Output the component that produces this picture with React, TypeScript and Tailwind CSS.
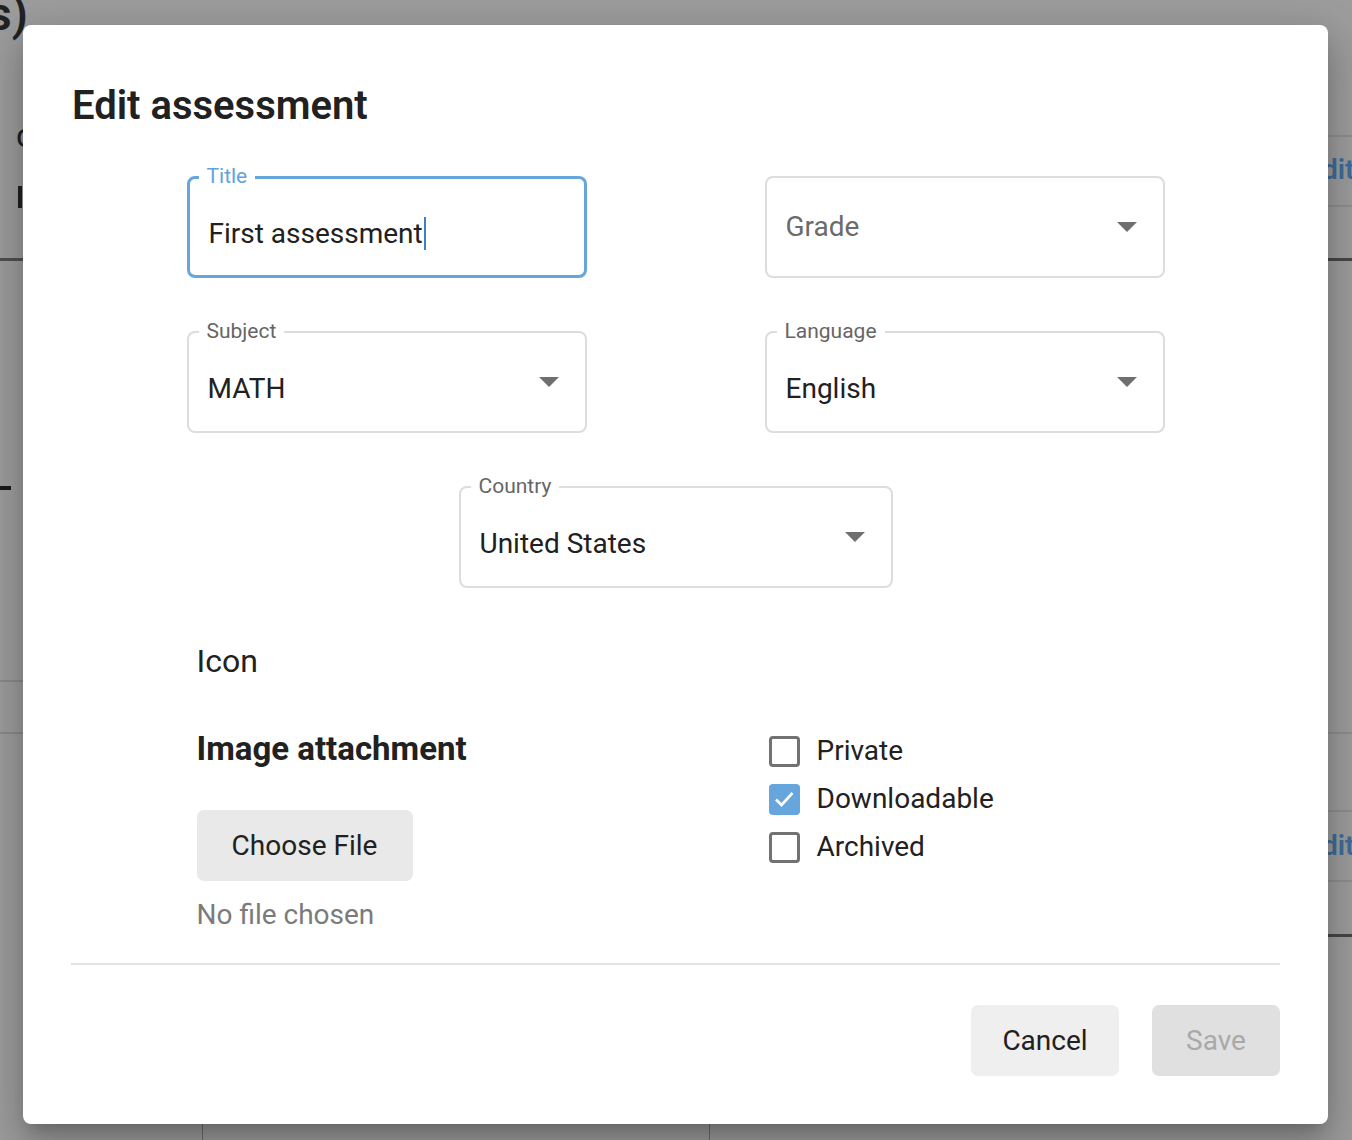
import React from 'react';

const font = { fontFamily: 'Roboto, "Noto Sans", sans-serif' };

const Arrow = () => (
  <svg width="20" height="10" viewBox="0 0 20 10" className="shrink-0">
    <path d="M0 0 L20 0 L10 10 Z" fill="#6f6f6f" />
  </svg>
);

type FieldProps = {
  label?: string;
  value: string;
  select?: boolean;
  focused?: boolean;
  placeholder?: boolean;
  className?: string;
};

const Field = ({ label, value, select, focused, placeholder, className = '' }: FieldProps) => (
  <div
    className={`relative h-[102px] rounded-[8px] flex items-center pl-[19px] pr-[26px] ${
      focused ? 'border-[3px] border-[#67a5dd]' : 'border-2 border-[#dddddd]'
    } ${className}`}
  >
    {label && (
      <span
        className={`absolute bg-white px-[8px] text-[21px] leading-[26px] ${
          focused ? 'text-[#62a2dc] -top-[16px] left-[9px]' : 'text-[#666666] -top-[15px] left-[10px]'
        }`}
      >
        {label}
      </span>
    )}
    <div className={`flex-1 flex items-center ${label ? 'pt-[13px]' : ''}`}>
      <span className={`text-[28px] leading-[34px] ${placeholder ? 'text-[#6b6b6b]' : 'text-[#212121]'}`}>
        {value}
      </span>
      {focused && <span className="ml-[1px] w-[2px] h-[33px] bg-[#3b82c4]" />}
    </div>
    {select && <Arrow />}
  </div>
);

const Check = ({ checked, label }: { checked?: boolean; label: string }) => (
  <label className="flex items-center h-[48px]">
    <span
      className={`w-[31px] h-[31px] rounded-[4px] flex items-center justify-center ${
        checked ? 'bg-[#67a5dd]' : 'border-[3px] border-[#727272]'
      }`}
    >
      {checked && (
        <svg width="24" height="24" viewBox="0 0 24 24">
          <path d="M4 12.5 L9.5 18 L20.5 6" stroke="white" strokeWidth="2.6" fill="none" />
        </svg>
      )}
    </span>
    <span className="ml-[17px] text-[28px] text-[#212121]">{label}</span>
  </label>
);

// faint page content seen through the backdrop
const Backdrop = () => (
  <div className="absolute inset-0">
    <div className="absolute -top-[20px] -left-[12px] text-[46px] font-semibold text-[#222]">s)</div>
    <div className="absolute top-[110px] left-[16px] text-[34px] text-[#222]">c</div>
    <div className="absolute top-[186px] left-[18px] w-[4px] h-[22px] bg-[#222]" />
    <div className="absolute top-[258px] left-0 w-[23px] h-[3px] bg-[#505050]" />
    <div className="absolute top-[486px] left-0 w-[11px] h-[4px] bg-[#1a1a1a]" />
    <div className="absolute top-[680px] left-0 w-[23px] h-[2px] bg-[#8a8a8a]" />
    <div className="absolute top-[732px] left-0 w-[23px] h-[2px] bg-[#8a8a8a]" />
    <div className="absolute top-[135px] left-[1322px] right-0 h-[72px] border-y-2 border-[#8f8f8f] text-[28px] leading-[66px] font-semibold text-[#3f6c9a]">dit</div>
    <div className="absolute top-[258px] right-0 w-[24px] h-[3px] bg-[#474747]" />
    <div className="absolute top-[732px] right-0 w-[24px] h-[2px] bg-[#8f8f8f]" />
    <div className="absolute top-[810px] left-[1322px] right-0 h-[72px] border-y-2 border-[#8f8f8f] text-[28px] leading-[68px] font-semibold text-[#3f6c9a]">dit</div>
    <div className="absolute top-[934px] right-0 w-[24px] h-[3px] bg-[#474747]" />
    <div className="absolute top-[1124px] left-[202px] w-[508px] h-[16px] border-x border-[#6c6c6c]" />
  </div>
);

export default function App() {
  return (
    <div className="relative w-full h-[1140px] overflow-hidden bg-[#9d9d9d]" style={font}>
      <Backdrop />

      <div className="relative pt-[25px] pl-[23px]">
        <div className="w-[1305px] h-[1099px] bg-white rounded-[8px] px-[48px] pt-[55px] shadow-[0_11px_15px_-7px_rgba(0,0,0,0.2),0_24px_38px_3px_rgba(0,0,0,0.14),0_9px_46px_8px_rgba(0,0,0,0.12)] flex flex-col">
          <h2 className="pl-[1px] text-[40px] leading-[52px] font-semibold text-[#212121]">Edit assessment</h2>

          <div className="w-[978px] mx-auto mt-[44px]">
            <div className="grid grid-cols-[400px_400px] gap-x-[178px] gap-y-[53px]">
              <Field label="Title" value="First assessment" focused />
              <Field value="Grade" select placeholder />
              <Field label="Subject" value="MATH" select />
              <Field label="Language" value="English" select />
            </div>
            <div className="flex justify-center mt-[53px]">
              <Field label="Country" value="United States" select className="w-[434px]" />
            </div>

            <div className="pl-[10px] mt-[53px] text-[32px] leading-[40px] text-[#212121]">Icon</div>

            <div className="grid grid-cols-[578px_400px] mt-[48px]">
              <div className="pl-[10px]">
                <div className="text-[33px] leading-[40px] font-bold text-[#212121]">Image attachment</div>
                <button className="mt-[41px] w-[216px] h-[71px] rounded-[7px] bg-[#e9e9e9] text-[28px] text-[#212121]">
                  Choose File
                </button>
                <div className="mt-[14px] text-[28px] leading-[40px] text-[#7b7b7b]">No file chosen</div>
              </div>
              <div className="pl-[4px] -mt-[2px]">
                <Check label="Private" />
                <Check label="Downloadable" checked />
                <Check label="Archived" />
              </div>
            </div>
          </div>

          <div className="mt-[28px] h-[2px] bg-[#e3e3e3]" />

          <div className="flex justify-end gap-[33px] mt-[40px]">
            <button className="w-[148px] h-[71px] rounded-[7px] bg-[#efefef] text-[28px] text-[#212121]">Cancel</button>
            <button className="w-[128px] h-[71px] rounded-[7px] bg-[#e0e0e0] text-[28px] text-[#a9a9a9]">Save</button>
          </div>
        </div>
      </div>
    </div>
  );
}
